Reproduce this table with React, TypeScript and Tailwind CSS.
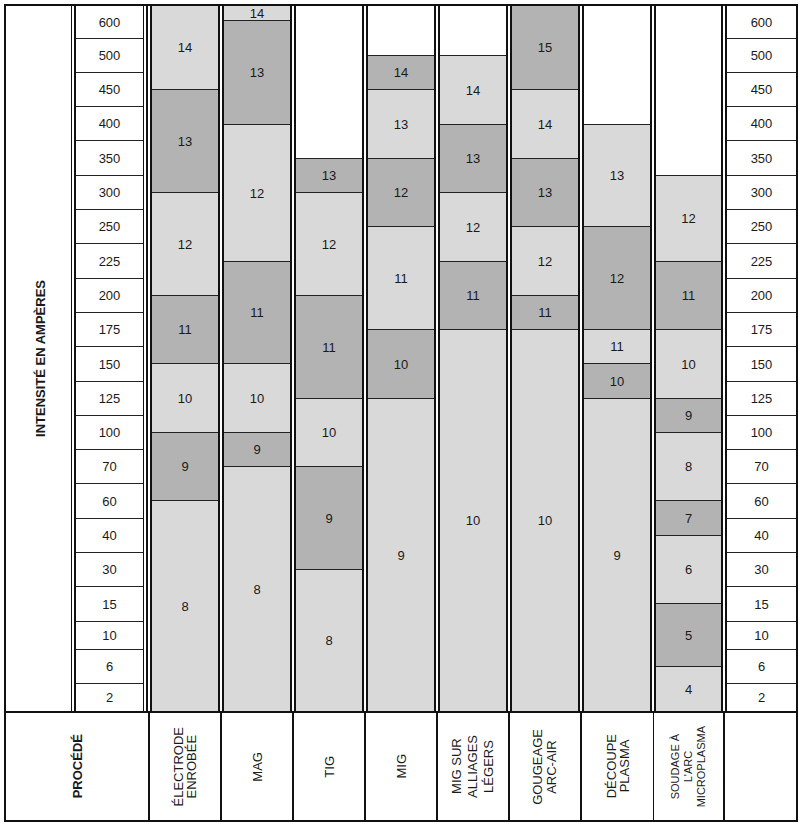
import React from "react";

type Seg = { label: string | null; end: number; shade: "w" | "l" | "d" };

const TOP = 6;
const BOTTOM = 711;

const values = ["600","500","450","400","350","300","250","225","200","175","150","125","100","70","60","40","30","15","10","6","2"];
const rowHeights = [33,34,34,34,35,34,34,35,34,34,35,34,34,34,35,34,34,35,28,34,27];

const L = (label: string, end: number): Seg => ({ label, end, shade: "l" });
const D = (label: string, end: number): Seg => ({ label, end, shade: "d" });
const W = (end: number): Seg => ({ label: null, end, shade: "w" });

const columns: { segs: Seg[]; w: string }[] = [
  { w: "w-[70px]", segs: [L("14", 89), D("13", 192), L("12", 295), D("11", 363), L("10", 432), D("9", 500), L("8", BOTTOM)] },
  { w: "w-[70px]", segs: [L("14", 20), D("13", 124), L("12", 261), D("11", 363), L("10", 432), D("9", 466), L("8", BOTTOM)] },
  { w: "w-[70px]", segs: [W(158), D("13", 192), L("12", 295), D("11", 398), L("10", 466), D("9", 569), L("8", BOTTOM)] },
  { w: "w-[70px]", segs: [W(55), D("14", 89), L("13", 158), D("12", 226), L("11", 329), D("10", 398), L("9", BOTTOM)] },
  { w: "w-[70px]", segs: [W(55), L("14", 124), D("13", 192), L("12", 261), D("11", 329), L("10", BOTTOM)] },
  { w: "w-[70px]", segs: [D("15", 89), L("14", 158), D("13", 226), L("12", 295), D("11", 329), L("10", BOTTOM)] },
  { w: "w-[70px]", segs: [W(124), L("13", 226), D("12", 329), L("11", 363), D("10", 398), L("9", BOTTOM)] },
  { w: "w-[69px]", segs: [W(175), L("12", 261), D("11", 329), L("10", 398), D("9", 432), L("8", 500), D("7", 535), L("6", 603), D("5", 666), L("4", BOTTOM)] },
];

function ValuesColumn({ left }: { left: boolean }) {
  return (
    <div
      className={
        left
          ? "w-[70px] ml-[2px] flex flex-col border-l-2 border-r border-[#111]"
          : "flex-1 ml-[2px] flex flex-col border-l-2 border-[#111]"
      }
    >
      {values.map((v, i) => (
        <div
          key={v}
          className={
            i < values.length - 1
              ? "flex items-center justify-center border-b border-[#222] text-[13px] leading-none text-[#1a1a1a]"
              : "flex items-center justify-center text-[13px] leading-none text-[#1a1a1a]"
          }
          style={{ height: rowHeights[i] }}
        >
          {v}
        </div>
      ))}
    </div>
  );
}

function BarColumn({ segs, w }: { segs: Seg[]; w: string }) {
  let prev = TOP;
  return (
    <div className={`${w} flex flex-col border-x-2 border-[#111]`}>
      {segs.map((s, i) => {
        const h = s.end - prev;
        prev = s.end;
        const bg = s.shade === "w" ? "bg-white" : s.shade === "l" ? "bg-[#d9d9d9]" : "bg-[#b3b3b3]";
        return (
          <div
            key={i}
            className={`${bg} ${i > 0 ? "border-t border-[#222]" : ""} flex items-center justify-center text-[13px] leading-none text-[#1a1a1a] overflow-hidden`}
            style={{ height: h }}
          >
            {s.label}
          </div>
        );
      })}
    </div>
  );
}

const bottomLabels: { lines: string[]; cls: string; border: string; w: string }[] = [
  { lines: ["ÉLECTRODE", "ENROBÉE"], cls: "text-[13px] leading-[13px]", border: "border-r-2", w: "w-[72px]" },
  { lines: ["MAG"], cls: "text-[13px] leading-[13px]", border: "border-r-2", w: "w-[72px]" },
  { lines: ["TIG"], cls: "text-[13px] leading-[13px]", border: "border-r-2", w: "w-[72px]" },
  { lines: ["MIG"], cls: "text-[13px] leading-[13px]", border: "border-r-2", w: "w-[72px]" },
  { lines: ["MIG SUR", "ALLIAGES", "LÉGERS"], cls: "text-[13px] leading-[16px]", border: "border-r-2", w: "w-[72px]" },
  { lines: ["GOUGEAGE", "ARC-AIR"], cls: "text-[13px] leading-[14px]", border: "border-r-2", w: "w-[72px]" },
  { lines: ["DÉCOUPE", "PLASMA"], cls: "text-[13px] leading-[13px]", border: "border-r", w: "w-[72px]" },
  { lines: ["SOUDAGE À", "L'ARC", "MICROPLASMA"], cls: "text-[11px] leading-[13px]", border: "border-r-2", w: "w-[71px]" },
];

export default function App() {
  return (
    <div className="w-[800px] h-[827px] bg-white p-[4px] font-['Liberation_Sans',Arial,Helvetica,sans-serif] text-[#1a1a1a]">
      <div className="w-[794px] h-[818px] border-2 border-[#111] flex flex-col">
        {/* Top chart */}
        <div className="h-[707px] flex border-b-2 border-[#111]">
          <div className="w-[66px] border-r border-[#111] flex items-center justify-center pl-1">
            <span className="[writing-mode:vertical-rl] rotate-180 font-bold text-[13px] leading-none whitespace-nowrap">
              INTENSITÉ EN AMPÈRES
            </span>
          </div>
          <ValuesColumn left />
          <div className="ml-[2px] border-l-2 border-[#111] pl-[2px] flex gap-[2px]">
            {columns.map((c, i) => (
              <BarColumn key={i} segs={c.segs} w={c.w} />
            ))}
          </div>
          <ValuesColumn left={false} />
        </div>
        {/* Bottom labels */}
        <div className="flex-1 flex">
          <div className="w-[144px] border-r-2 border-[#111] flex items-center justify-center">
            <span className="[writing-mode:vertical-rl] rotate-180 font-bold text-[13px] leading-none whitespace-nowrap">
              PROCÉDÉ
            </span>
          </div>
          {bottomLabels.map((b, i) => (
            <div key={i} className={`${b.w} ${b.border} border-[#111] flex items-center justify-center`}>
              <span className={`[writing-mode:vertical-rl] rotate-180 text-center whitespace-nowrap ${b.cls}`}>
                {b.lines.map((l, j) => (
                  <React.Fragment key={j}>
                    {j > 0 && <br />}
                    {l}
                  </React.Fragment>
                ))}
              </span>
            </div>
          ))}
          <div className="flex-1" />
        </div>
      </div>
    </div>
  );
}
